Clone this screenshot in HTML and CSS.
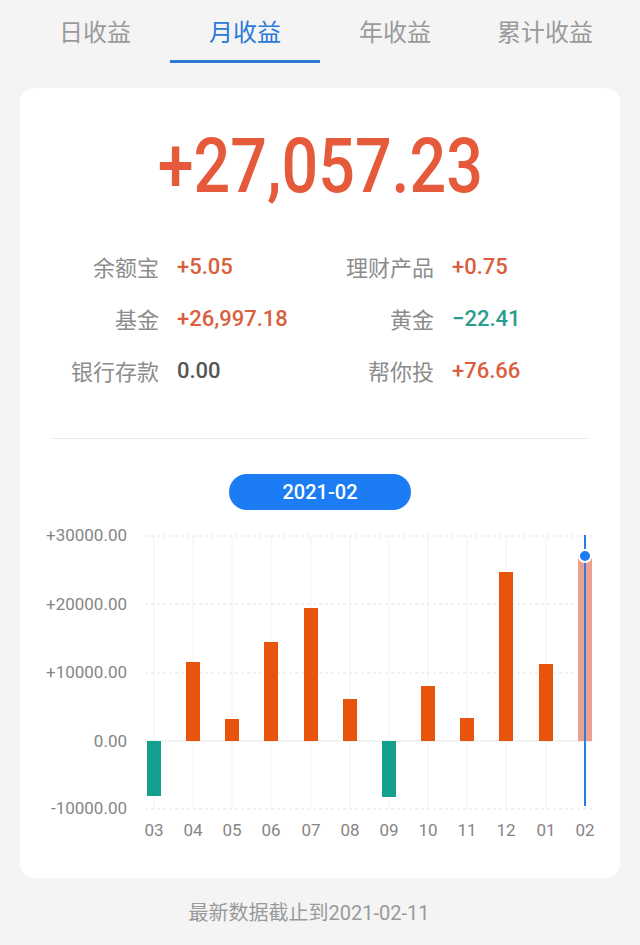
FILE: index.html
```html
<!DOCTYPE html>
<html lang="zh-CN">

<head>
  <meta charset="UTF-8">
  <meta name="viewport" content="width=device-width, initial-scale=1.0">
  <title>月收益</title>
  <link rel="stylesheet" href="styles.css">
</head>

<body>
  <nav class="tabs">
    <div class="tab">日收益</div>
    <div class="tab active">月收益</div>
    <div class="tab">年收益</div>
    <div class="tab">累计收益</div>
  </nav>

  <section class="card">
    <div class="total"><span class="totalValue">+27,057.23</span></div>

    <div class="stats">
      <div class="statLabel">余额宝</div>
      <div class="statValue up">+5.05</div>
      <div class="statLabel">理财产品</div>
      <div class="statValue up">+0.75</div>

      <div class="statLabel">基金</div>
      <div class="statValue up">+26,997.18</div>
      <div class="statLabel">黄金</div>
      <div class="statValue down">−22.41</div>

      <div class="statLabel">银行存款</div>
      <div class="statValue">0.00</div>
      <div class="statLabel">帮你投</div>
      <div class="statValue up">+76.66</div>
    </div>

    <div class="divider"></div>

    <div class="monthPill">2021-02</div>

    <svg class="chart" width="600" height="340" viewBox="0 0 600 340">
      <g class="vgrid">
        <line x1="134" y1="26" x2="134" y2="299"></line>
        <line x1="173" y1="26" x2="173" y2="299"></line>
        <line x1="212" y1="26" x2="212" y2="299"></line>
        <line x1="251" y1="26" x2="251" y2="299"></line>
        <line x1="291" y1="26" x2="291" y2="299"></line>
        <line x1="330" y1="26" x2="330" y2="299"></line>
        <line x1="369" y1="26" x2="369" y2="299"></line>
        <line x1="408" y1="26" x2="408" y2="299"></line>
        <line x1="447" y1="26" x2="447" y2="299"></line>
        <line x1="486" y1="26" x2="486" y2="299"></line>
        <line x1="526" y1="26" x2="526" y2="299"></line>
      </g>
      <g class="hgrid">
        <line x1="125" y1="26" x2="573" y2="26"></line>
        <line x1="125" y1="94" x2="573" y2="94"></line>
        <line x1="125" y1="163" x2="573" y2="163"></line>
        <line x1="125" y1="299" x2="573" y2="299"></line>
      </g>
      <line class="zeroLine" x1="125" y1="231" x2="573" y2="231"></line>

      <g class="yLabels">
        <text x="107" y="31">+30000.00</text>
        <text x="107" y="100">+20000.00</text>
        <text x="107" y="168">+10000.00</text>
        <text x="107" y="237">0.00</text>
        <text x="107" y="304">-10000.00</text>
      </g>

      <g class="bars">
        <rect class="neg" x="127" y="231" width="14" height="55"></rect>
        <rect x="166" y="152" width="14" height="79"></rect>
        <rect x="205" y="209" width="14" height="22"></rect>
        <rect x="244" y="132" width="14" height="99"></rect>
        <rect x="284" y="98" width="14" height="133"></rect>
        <rect x="323" y="189" width="14" height="42"></rect>
        <rect class="neg" x="362" y="231" width="14" height="56"></rect>
        <rect x="401" y="176" width="14" height="55"></rect>
        <rect x="440" y="208" width="14" height="23"></rect>
        <rect x="479" y="62" width="14" height="169"></rect>
        <rect x="519" y="154" width="14" height="77"></rect>
        <rect class="current" x="558" y="48" width="14" height="183"></rect>
      </g>

      <line class="cursor" x1="565" y1="25" x2="565" y2="296"></line>
      <circle class="cursorDot" cx="565" cy="46" r="6"></circle>

      <g class="xLabels">
        <text x="134" y="326">03</text>
        <text x="173" y="326">04</text>
        <text x="212" y="326">05</text>
        <text x="251" y="326">06</text>
        <text x="291" y="326">07</text>
        <text x="330" y="326">08</text>
        <text x="369" y="326">09</text>
        <text x="408" y="326">10</text>
        <text x="447" y="326">11</text>
        <text x="486" y="326">12</text>
        <text x="526" y="326">01</text>
        <text x="565" y="326">02</text>
      </g>
    </svg>
  </section>

  <footer class="updated">最新数据截止到2021-02-11</footer>
</body>

</html>
```

FILE: styles.css
```css
body {
  font-family: Roboto, "Noto Sans CJK SC", sans-serif;
  background-color: #f4f4f4;
  margin: 0;
  padding: 0;
  color: #333;
}

.tabs {
  display: grid;
  grid-template-columns: repeat(4, 1fr);
  padding: 0 20px;
}

.tab {
  padding-top: 14px;
  padding-bottom: 8px;
  line-height: 38px;
  font-size: 24px;
  text-align: center;
  color: #9a9a9a;
  border-bottom: 3px solid transparent;
}

.tab.active {
  color: #2b7ad6;
  border-bottom-color: #2b7ad6;
}

.card {
  margin: 25px 20px 0;
  height: 790px;
  box-sizing: border-box;
  padding-top: 33px;
  background-color: #fff;
  border-radius: 14px;
}

.total {
  text-align: center;
  line-height: 90px;
  height: 90px;
}

.totalValue {
  display: inline-block;
  font-size: 76px;
  font-weight: 500;
  color: #e65a3c;
  transform: scaleX(0.85);
}

.stats {
  display: grid;
  grid-template-columns: 124px 151px 124px 151px;
  grid-auto-rows: 52px;
  align-items: center;
  margin-top: 29px;
  padding-left: 33px;
}

.statLabel {
  text-align: right;
  padding-right: 18px;
  font-size: 22px;
  color: #8c8c8c;
}

.statValue {
  font-size: 22px;
  font-weight: 500;
  color: #555;
}

.statValue.up {
  color: #d95f3e;
}

.statValue.down {
  color: #2a9d8e;
}

.divider {
  margin: 42px 33px 0;
  height: 1px;
  background-color: #e6e6e6;
}

.monthPill {
  width: 182px;
  height: 36px;
  margin: 35px auto 0;
  border-radius: 18px;
  background-color: #1b7cf4;
  color: #fff;
  font-size: 20px;
  font-weight: 500;
  line-height: 36px;
  text-align: center;
}

.chart {
  display: block;
}

.vgrid line {
  stroke: #f3f3f3;
  stroke-width: 1;
}

.hgrid line {
  stroke: #e4e4e4;
  stroke-width: 1;
  stroke-dasharray: 3 3;
}

.zeroLine {
  stroke: #e6e6e6;
  stroke-width: 1;
}

.yLabels text {
  font-family: Roboto, sans-serif;
  font-size: 17px;
  fill: #858585;
  text-anchor: end;
}

.xLabels text {
  font-family: Roboto, sans-serif;
  font-size: 17px;
  fill: #858585;
  text-anchor: middle;
}

.bars rect {
  fill: #e8540c;
}

.bars rect.neg {
  fill: #14a08f;
}

.bars rect.current {
  fill: #eca18d;
}

.cursor {
  stroke: #2a7ce0;
  stroke-width: 2;
}

.cursorDot {
  fill: #1b7cf4;
  stroke: #fff;
  stroke-width: 2;
}

.updated {
  margin-top: 20px;
  padding-right: 22px;
  line-height: 30px;
  text-align: center;
  font-size: 20px;
  color: #9a9a9a;
}
```
